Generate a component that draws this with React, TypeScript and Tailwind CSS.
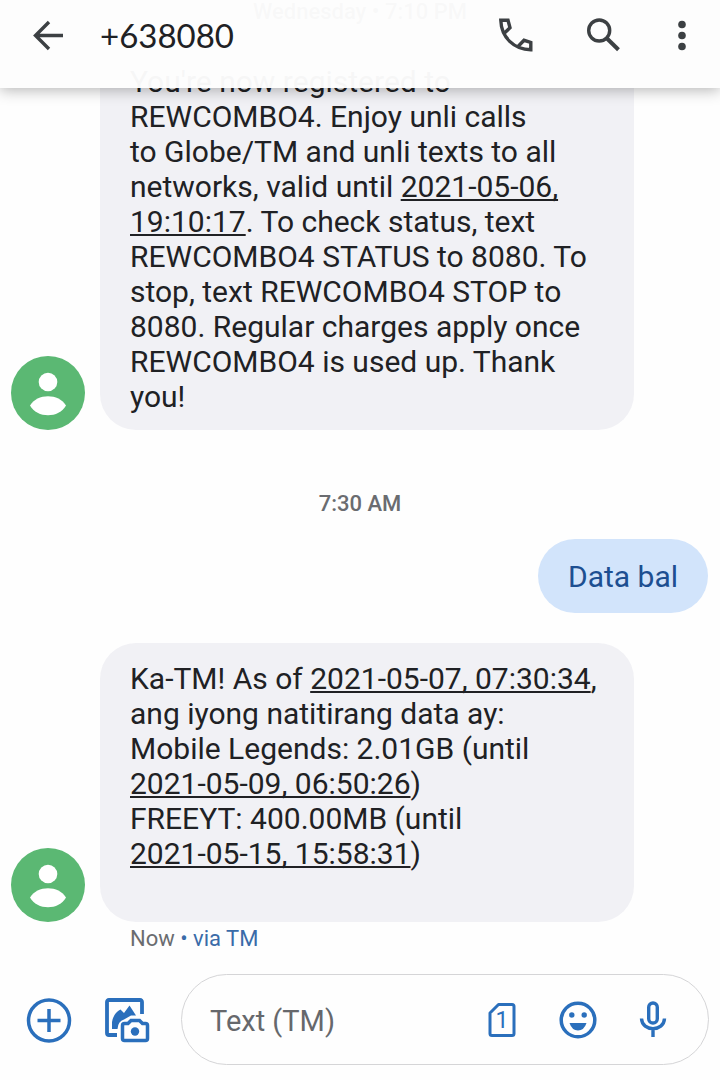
import React from 'react'

function Avatar() {
  return (
    <svg viewBox="0 0 74 74" className="size-[74px] shrink-0" role="img" aria-label="Contact">
      <circle cx="37" cy="37" r="37" fill="#5bb873" />
      <circle cx="37" cy="26" r="9.3" fill="#fff" />
      <path d="M19 49.500C26 37 48 37 55 49.500C48 62.500 26 62.500 19 49.500Z" fill="#fff" />
    </svg>
  )
}

function Incoming({ children }: { children: React.ReactNode }) {
  return (
    <div className="flex items-end gap-[15px] pl-[11px] pr-[86px]">
      <Avatar />
      <div className="grow rounded-[36px] bg-[#f1f1f5] px-[30px] pt-[18px] pb-4 text-[#202124]">
        {children}
      </div>
    </div>
  )
}

function Stamp({ children }: { children: React.ReactNode }) {
  return (
    <a href="#" className="underline decoration-2 underline-offset-2 [text-decoration-skip-ink:none]">
      {children}
    </a>
  )
}

function Header() {
  return (
    <header className="absolute inset-x-0 top-0 z-10 flex h-[88px] items-center bg-[#fdfdfd]/97 pr-[30px] pb-[18px] pl-8 text-[#3c4043] shadow-[0_2px_14px_rgba(0,0,0,0.3)]">
      <button aria-label="Back">
        <svg viewBox="0 0 32 32" className="size-8" fill="none" stroke="currentColor" strokeWidth="3.400">
          <path d="M31 16.500H4M17 3L3.500 16.500L17 30" />
        </svg>
      </button>
      <h1 className="ml-9 grow font-['Lato',sans-serif] text-[33px] leading-10 text-[#202124]">
        +638080
      </h1>
      <div className="flex items-center gap-[52px]">
        <button aria-label="Call">
          <svg viewBox="0 0 36 36" className="size-9" fill="none" stroke="currentColor" strokeWidth="3.400">
            <path d="M7 15.500L12 10.800L10 3.300H2.800C3.300 20.500 16 32.500 32.800 32.800V25.500L26 23.300L20.500 29" />
          </svg>
        </button>
        <button aria-label="Search">
          <svg viewBox="0 0 36 36" className="size-9" fill="none" stroke="currentColor">
            <circle cx="13.200" cy="13.500" r="10.500" strokeWidth="3.400" />
            <path d="M21 21.500L32.500 32.800" strokeWidth="4" />
          </svg>
        </button>
        <button aria-label="More options">
          <svg viewBox="0 0 16 36" className="h-9 w-4" fill="currentColor">
            <circle cx="8" cy="7.500" r="3.800" />
            <circle cx="8" cy="18.500" r="3.800" />
            <circle cx="8" cy="29.500" r="3.800" />
          </svg>
        </button>
      </div>
    </header>
  )
}

function Composer() {
  return (
    <form className="flex items-center pt-[22px] pr-[11px] pb-[15px] pl-[26px] text-[#2a6fbc]">
      <button type="button" aria-label="Add attachment">
        <svg viewBox="0 0 46 46" className="size-[46px]" fill="none" stroke="currentColor" strokeWidth="3.500">
          <circle cx="23" cy="23.500" r="20.500" />
          <path d="M23 12V35M11.500 23.500H34.500" />
        </svg>
      </button>
      <button type="button" aria-label="Gallery" className="ml-8">
        <svg viewBox="0 0 46 46" className="size-[46px]" fill="none" stroke="currentColor" strokeWidth="3.800">
          <path d="M38 17V5Q38 3 36 3H5Q3 3 3 5V36Q3 38 5 38H13" />
          <path
            d="M8 32V25Q9.500 16 16.500 12.500L20 16L25.500 8.500L32 18.500H27L20 22.500Q14 24 13.500 32Z"
            fill="currentColor"
            stroke="none"
          />
          <path
            d="M20.500 26.500H24L27 23.500H35.500L38.500 26.500H41.500Q43.500 26.500 43.500 28.500V41.500Q43.500 43.500 41.500 43.500H20.500Q18.500 43.500 18.500 41.500V28.500Q18.500 26.500 20.500 26.500Z"
            strokeWidth="3.500"
          />
          <circle cx="31" cy="34.500" r="4.200" fill="currentColor" stroke="none" />
        </svg>
      </button>
      <div className="ml-[31px] flex h-[91px] min-w-0 grow items-center rounded-full border border-[#d5d5d7] pr-[41px] pl-7">
        <input
          type="text"
          aria-label="Message"
          placeholder="Text (TM)"
          className="w-0 min-w-0 grow pt-1 text-[29px] outline-none placeholder:text-[#66686c]"
        />
        <button type="button" aria-label="SIM 1">
          <svg viewBox="0 0 28 36" className="h-9 w-7" fill="none" stroke="currentColor" strokeWidth="3">
            <path d="M10.500 2.500H24Q26 2.500 26 4.500V31.500Q26 33.500 24 33.500H4Q2 33.500 2 31.500V11Z" strokeLinejoin="round" />
            <text x="14" y="26" textAnchor="middle" fill="currentColor" stroke="none" fontSize="23">
              1
            </text>
          </svg>
        </button>
        <button type="button" aria-label="Emoji" className="ml-[43px]">
          <svg viewBox="0 0 38 38" className="size-[38px]" fill="currentColor">
            <circle cx="19" cy="19" r="16.800" fill="none" stroke="currentColor" strokeWidth="3.500" />
            <circle cx="12.800" cy="14" r="2.700" />
            <circle cx="25.200" cy="14" r="2.700" />
            <path d="M10.500 22H27.500Q25 29.500 19 29.500T10.500 22Z" />
          </svg>
        </button>
        <button type="button" aria-label="Voice message" className="ml-[42px]">
          <svg viewBox="0 0 28 38" className="h-[38px] w-7" fill="none" stroke="currentColor" strokeWidth="3.400">
            <rect x="9.700" y="2" width="8.600" height="20" rx="4.300" />
            <path d="M2.500 17.500C3 31 25 31 25.500 17.500M14 27.500V36" />
          </svg>
        </button>
      </div>
    </form>
  )
}

function App() {
  return (
    <div className="relative flex min-h-screen flex-col overflow-hidden bg-[#fefefe] font-['Roboto',sans-serif]">
      <Header />
      <main className="grow text-[30px] leading-[35px]">
        <p className="mb-[22px] text-center text-[22px] leading-6 font-medium text-[#5f6368]">
          Wednesday • 7:10 PM
        </p>
        <Incoming>
          You're now registered to
          <br />
          REWCOMBO4. Enjoy unli calls
          <br />
          to Globe/TM and unli texts to all
          <br />
          networks, valid until <Stamp>2021-05-06,</Stamp>
          <br />
          <Stamp>19:10:17</Stamp>. To check status, text
          <br />
          REWCOMBO4 STATUS to 8080. To stop, text REWCOMBO4 STOP to 8080. Regular charges apply once
          REWCOMBO4 is used up. Thank you!
        </Incoming>
        <p className="mt-[62px] mb-[23px] text-center text-[22px] leading-6 font-medium text-[#6a6c70]">
          7:30 AM
        </p>
        <div className="mb-[30px] flex justify-end pr-3">
          <p className="rounded-full bg-[#d2e4fb] px-[30px] pt-5 pb-[19px] text-[#1d4f91]">Data bal</p>
        </div>
        <Incoming>
          Ka-TM! As of <Stamp>2021-05-07, 07:30:34</Stamp>,<br />
          ang iyong natitirang data ay:
          <br />
          Mobile Legends: 2.01GB (until
          <br />
          <Stamp>2021-05-09, 06:50:26</Stamp>)<br />
          FREEYT: 400.00MB (until
          <br />
          <Stamp>2021-05-15, 15:58:31</Stamp>)<br />
          <br />
        </Incoming>
        <p className="mt-1 pl-[130px] text-[22px] leading-[26px] text-[#6a6c70]">
          Now <span className="text-[#3a6ba8]">• via TM</span>
        </p>
      </main>
      <Composer />
    </div>
  )
}

export default App
